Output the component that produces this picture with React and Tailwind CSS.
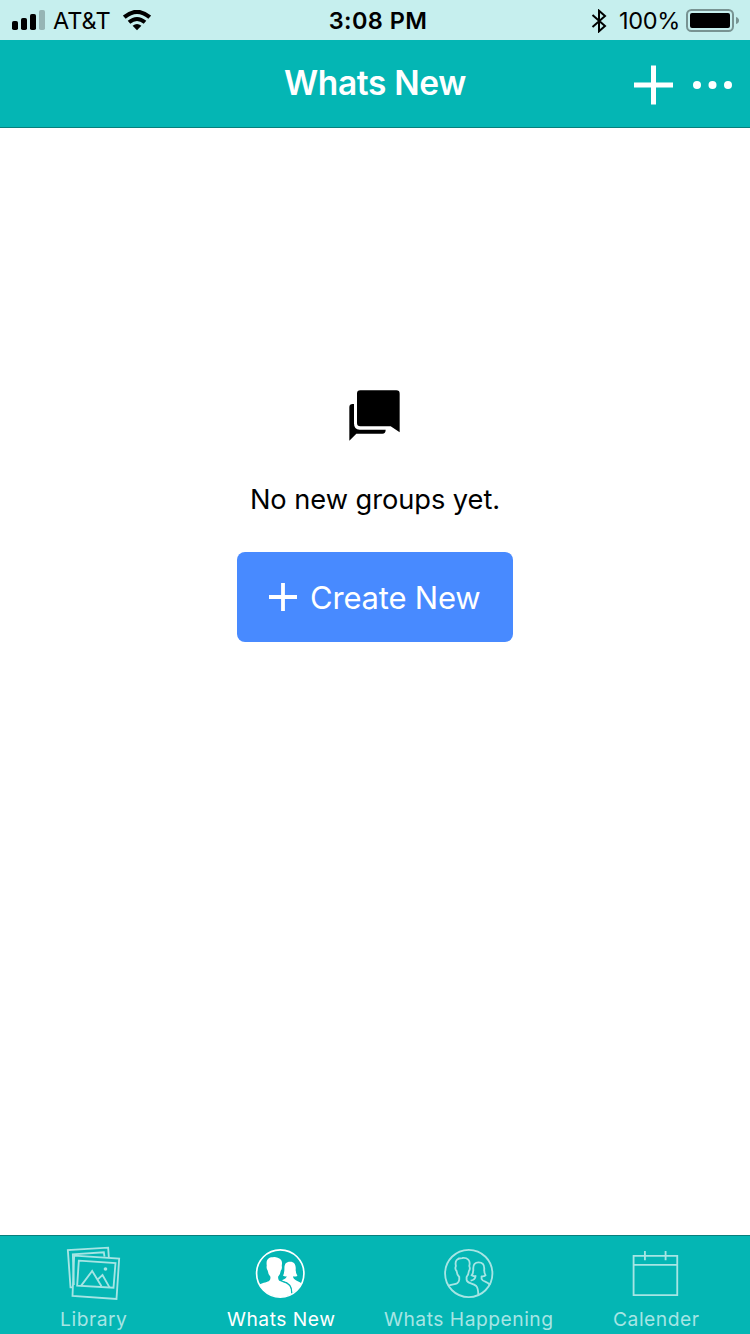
import React from "react";

function StatusBar() {
  return (
    <div className="flex h-10 items-center bg-[#c6efee] pt-px text-[24px] leading-none text-black">
      <div className="flex w-[250px] items-center">
        <svg className="mb-[2px] ml-3 h-[20px] w-[33px]" viewBox="0 0 33 20">
          <rect x="0" y="11" width="6" height="9" rx="1.8" />
          <rect x="9" y="8" width="6" height="12" rx="1.8" />
          <rect x="18" y="4" width="6" height="16" rx="1.8" />
          <rect x="27" y="0" width="6" height="20" rx="1.8" fill="#96b5b5" />
        </svg>
        <span className="ml-[8px] w-[70px] pt-px text-[23.5px]">AT&amp;T</span>
        <svg className="h-[21px] w-[28px]" viewBox="0 0 28 21">
          <path d="M1.3 7.2Q14 -3.4 26.7 7.2" fill="none" stroke="#000" strokeWidth="4.2" />
          <path d="M6 12.3Q14 5.6 22 12.3" fill="none" stroke="#000" strokeWidth="4" />
          <path d="M9.6 15.8Q14 12.2 18.4 15.8L14 20.3Z" />
        </svg>
      </div>
      <div className="w-[256px] pt-px text-center text-[23.5px] font-semibold tracking-[0.4px]">3:08 PM</div>
      <div className="flex flex-1 items-center justify-end pr-[11px]">
        <svg className="mr-[12px] h-[24px] w-[16px]" viewBox="0 0 16 24">
          <path d="M1.5 6L14 17L8 22.3V1.7L14 7L1.5 18" fill="none" stroke="#000" strokeWidth="2" />
        </svg>
        <span className="pt-px text-[23.5px] tracking-[-0.3px]">100%</span>
        <svg className="ml-[6px] h-[24px] w-[53px]" viewBox="0 0 53 24">
          <rect x="1" y="1" width="46" height="21" rx="4.5" fill="none" stroke="#789392" strokeWidth="2" />
          <rect x="4" y="4" width="40" height="15" rx="2" />
          <path d="M50 8Q53 9 53 11.5T50 15Z" fill="#789392" />
        </svg>
      </div>
    </div>
  );
}

function Header() {
  return (
    <header className="flex h-[88px] items-center border-b border-[#087f7c] bg-[#04b6b4] text-white">
      <div className="w-[150px]" />
      <h1 className="flex-1 pt-px text-center text-[33.5px] leading-none font-semibold tracking-[-0.35px]">Whats New</h1>
      <div className="flex w-[150px] items-center gap-[20px] pt-[2px] pl-[34px]">
        <svg className="h-[40px] w-[39px]" viewBox="0 0 39 40">
          <path d="M0 20H39M19.5 0.5V39.5" stroke="#fff" strokeWidth="5" />
        </svg>
        <svg className="h-[40px] w-[39px]" viewBox="0 0 39 40" fill="#fff">
          <circle cx="4" cy="20" r="4" />
          <circle cx="19.5" cy="20" r="4" />
          <circle cx="35" cy="20" r="4" />
        </svg>
      </div>
    </header>
  );
}

function LibraryIcon() {
  return (
    <svg className="h-14 w-14" viewBox="77.5 57 168 168" fill="none" stroke="currentColor" strokeWidth="5.5">
      <path d="M98 187L91 187L83 75L204 68L206 97M101 180L98 88L191 82L193 95" />
      <path d="M102 92L237 101L229 222L97 213ZM116 107L226 114L220 188L111 182Z" />
      <path d="M123 182L156 138L184 184M172 164L187 150L208 187" />
      <circle cx="196" cy="132" r="5.5" fill="currentColor" stroke="none" />
    </svg>
  );
}

function PeopleFilledIcon() {
  return (
    <svg className="h-14 w-14" viewBox="99.75 57 168 168">
      <defs>
        <clipPath id="people-disc">
          <circle cx="181.5" cy="145.5" r="71" />
        </clipPath>
      </defs>
      <circle cx="181.5" cy="145.5" r="71" fill="none" stroke="currentColor" strokeWidth="5" />
      <g clipPath="url(#people-disc)" fill="currentColor">
        <path d="M115 181Q121 176 132 173C146 170 153 168 152 155Q145 148 144 137Q139 131 141 122C138 104 147 97 158 97Q164 94 174 98C187 102 188 111 186 122Q188 132 183 137Q182 148 175 155C175 170 182 168 194 172C209 177 214 188 216 203L208 223H115Z" />
        <path d="M188 165Q199 162 201 154Q195 155 190 152Q194 145 194 130C194 116 199 110 211 110S228 118 228 130Q227 145 233 152Q228 156 220 154Q220 163 231 167Q243 171 250 180L217 206C216 183 207 173 188 168Z" />
      </g>
      <path d="M188 169C208 173 217 185 216 204" fill="none" stroke="#04b6b4" strokeWidth="4" />
    </svg>
  );
}

function PeopleOutlineIcon() {
  return (
    <svg className="h-14 w-14" viewBox="197.25 57 168 168" fill="none" stroke="currentColor" strokeWidth="5.5" strokeLinejoin="round">
      <circle cx="280.5" cy="145.5" r="71" />
      <path d="M218 183C233 175 250 181 252 164V156Q245 149 244 138Q238 132 242 123C238 107 246 99 261 99C276 97 287 106 282 123Q286 132 281 138Q280 149 274 156V164C275 177 292 172 303 183Q309 190 309 209" />
      <path d="M286 167Q300 165 301 153Q295 155 289 151Q295 145 294 130C294 118 300 112 310 112S327 118 327 130Q326 145 331 151Q326 155 319 154V162Q321 167 330 170Q338 173 345 180" />
    </svg>
  );
}

function CalendarIcon() {
  return (
    <svg className="h-14 w-14" viewBox="84.75 57 168 168" fill="none" stroke="currentColor" strokeWidth="5.5">
      <path d="M101.5 92.5H232.5V210.5H101.5ZM101.5 119.5H232.5M135.5 78V106M197.5 78V106" />
    </svg>
  );
}

function Tab({ icon, label, active }) {
  return (
    <button className={"flex flex-col items-center pt-2 " + (active ? "text-white" : "text-[#a6e5e4]")}>
      {icon}
      <span className="mt-[7px] text-[19.25px] leading-6 tracking-[0.5px] whitespace-nowrap">{label}</span>
    </button>
  );
}

export default function App() {
  return (
    <div className="flex h-[1334px] w-[750px] flex-col overflow-hidden bg-white font-['Inter','Liberation_Sans',sans-serif]">
      <StatusBar />
      <Header />
      <main className="flex flex-1 flex-col items-center pt-[262px]">
        <svg className="mr-[1px] h-[51px] w-[51px]" viewBox="357 60 153 153">
          <path d="M391 61H499Q509 61 509 71V187L482 169H391Q381 169 381 159V71Q381 61 391 61Z" />
          <path d="M358 212V112Q358 102 368 102H372V160Q372 179 389 179H467Q467 191 457 191H379Z" />
        </svg>
        <p className="mt-[41px] text-[27.25px] leading-[36px] tracking-[-0.05px] text-black">No new groups yet.</p>
        <button className="mt-[34px] flex h-[90px] w-[276px] items-center rounded-lg bg-[#488aff] pl-8 text-white">
          <svg className="h-7 w-7 shrink-0" viewBox="0 0 28 28">
            <path d="M0 14H28M14 0V28" stroke="#fff" strokeWidth="3.8" />
          </svg>
          <span className="ml-[13px] pt-px text-[31px] leading-none tracking-[-0.2px] whitespace-nowrap">Create New</span>
        </button>
      </main>
      <nav className="grid h-[99px] grid-cols-4 border-t border-[#087f7c] bg-[#04b6b4]">
        <Tab icon={<LibraryIcon />} label="Library" />
        <Tab icon={<PeopleFilledIcon />} label="Whats New" active />
        <Tab icon={<PeopleOutlineIcon />} label="Whats Happening" />
        <Tab icon={<CalendarIcon />} label="Calender" />
      </nav>
    </div>
  );
}
